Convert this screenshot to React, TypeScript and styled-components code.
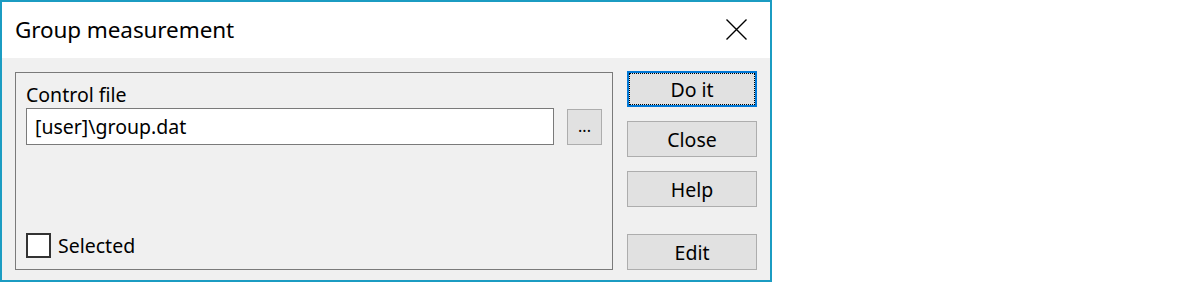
import React from "react";
import styled, { createGlobalStyle } from "styled-components";

const GlobalStyle = createGlobalStyle`
    html, body {
        margin: 0;
        padding: 0;
        background: #ffffff;
    }

    body {
        font-family: "Noto Sans", "Open Sans", "DejaVu Sans", sans-serif;
        color: #000000;
    }
`;

const Window = styled.div`
    box-sizing: border-box;
    width: 772px;
    height: 282px;
    border: 2px solid #1b9cc2;
    display: flex;
    flex-direction: column;
    background: #f0f0f0;
`;

const TitleBar = styled.div`
    height: 56px;
    flex: none;
    background: #ffffff;
    display: flex;
    align-items: center;
    justify-content: space-between;
    padding: 0 23px 0 13px;
`;

const Title = styled.span`
    font-size: 22.5px;
    letter-spacing: -0.1px;
    margin-top: -1px;
`;

const CloseIcon = styled.svg`
    width: 21px;
    height: 21px;
    display: block;
    margin-top: -2px;
`;

const Body = styled.div`
    flex: 1;
    display: flex;
    gap: 14px;
    padding: 13px 13px 10px 13px;
    font-size: 19.5px;
`;

const GroupBox = styled.div`
    box-sizing: border-box;
    width: 598px;
    margin-top: 1px;
    border: 1px solid #7a7a7a;
    display: flex;
    flex-direction: column;
    padding: 10px 10px 10px 10px;
`;

const Label = styled.div`
    height: 24px;
    line-height: 24px;
    margin-bottom: 1px;
`;

const FileRow = styled.div`
    display: flex;
    align-items: flex-start;
    gap: 13px;
`;

const TextInput = styled.div`
    box-sizing: border-box;
    flex: 1;
    height: 37px;
    background: #ffffff;
    border: 1px solid #7a7a7a;
    padding: 0 8px;
    display: flex;
    align-items: center;
`;

const BrowseButton = styled.button`
    box-sizing: border-box;
    width: 35px;
    height: 36px;
    margin-top: 1px;
    background: #e1e1e1;
    border: 1px solid #adadad;
    font: inherit;
    font-size: 16px;
    padding: 0 0 2px 0;
`;

const CheckRow = styled.label`
    margin-top: auto;
    display: flex;
    align-items: center;
    gap: 7px;
`;

const CheckBox = styled.span`
    box-sizing: border-box;
    width: 25px;
    height: 25px;
    border: 2px solid #333333;
    background: #ffffff;
`;

const ButtonColumn = styled.div`
    width: 130px;
    display: flex;
    flex-direction: column;
    gap: 14px;
`;

const DialogButton = styled.button<{ $focused?: boolean; $bottom?: boolean }>`
    position: relative;
    box-sizing: border-box;
    width: 130px;
    height: 36px;
    margin-top: ${props => (props.$bottom ? "auto" : "0")};
    background: #e1e1e1;
    border: ${props => (props.$focused ? "2px solid #0078d7" : "1px solid #adadad")};
    font: inherit;
    color: #000000;
    padding: 0;

    &::after {
        content: "";
        display: ${props => (props.$focused ? "block" : "none")};
        position: absolute;
        inset: 0;
        border: 1px dotted #000000;
    }
`;

export default function App() {
    return (
        <>
            <GlobalStyle />
            <Window>
                <TitleBar>
                    <Title>Group measurement</Title>
                    <CloseIcon viewBox="0 0 21 21">
                        <path d="M0.5 0.5 L20.5 20.5 M20.5 0.5 L0.5 20.5" stroke="#000000" strokeWidth="1.4" fill="none" />
                    </CloseIcon>
                </TitleBar>
                <Body>
                    <GroupBox>
                        <Label>Control file</Label>
                        <FileRow>
                            <TextInput>[user]\group.dat</TextInput>
                            <BrowseButton>...</BrowseButton>
                        </FileRow>
                        <CheckRow>
                            <CheckBox />
                            Selected
                        </CheckRow>
                    </GroupBox>
                    <ButtonColumn>
                        <DialogButton $focused>Do it</DialogButton>
                        <DialogButton>Close</DialogButton>
                        <DialogButton>Help</DialogButton>
                        <DialogButton $bottom>Edit</DialogButton>
                    </ButtonColumn>
                </Body>
            </Window>
        </>
    );
}
